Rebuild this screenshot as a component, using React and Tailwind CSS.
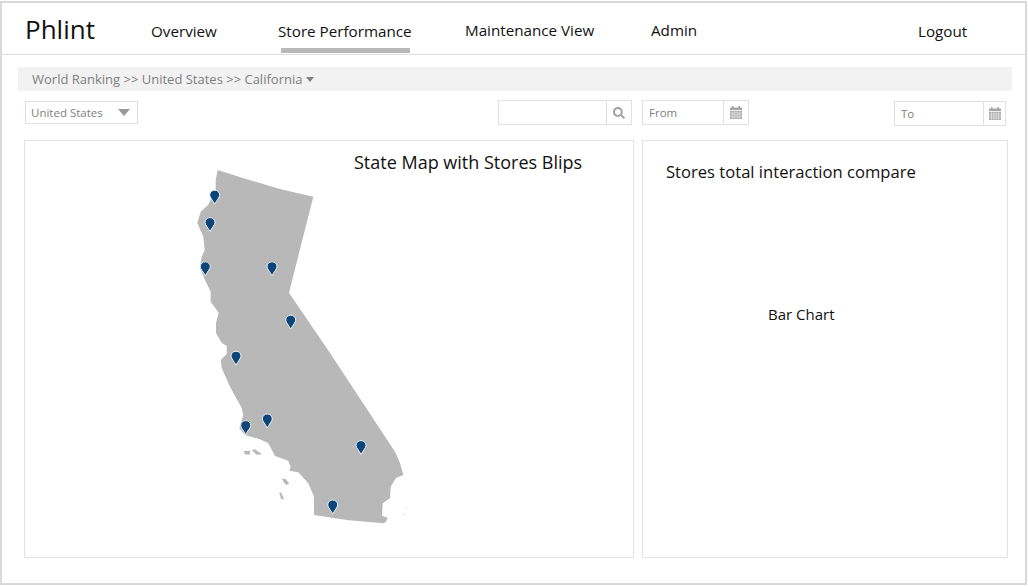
import React from "react";
import { FaSearch } from "react-icons/fa";

const outline =
  "217.7,170 246,179 280,189 313.3,196.7 289,292.7 330,353 395,451.7 400,463 403.3,475 396,478 390.7,486.7 390,498.3 382.7,503.3 382,515.7 387.7,517.7 386,522 383.3,523.3 346.7,520 314,515 314,496.7 308.3,483.3 298.3,472.3 289.3,470.7 290.7,467 288.3,460.7 275,456 268.3,443.3 260,439.3 245,435 239.3,428.3 243.3,415 241.7,408 230,386.7 221.7,368 220.7,360 226.7,354 226.7,346 221.7,342.7 216,333 216,323 218.7,312.7 210.7,301.7 210.7,291.7 205,280 200,268 201.7,256.7 204.7,250 203.3,236.7 197.3,222.7 200.7,211.7 208,205 215.7,190 215.7,180";

const islands = [
  "243.5,451 250,451 250,454.5 245,454.5",
  "251.7,450 255,449.3 262.3,454.3 256.7,454.7",
  "282,478.3 286,479.3 289.3,484 286,484.7 283.3,481.7",
  "279.3,492.7 281,492.3 284,499.3 281,499",
  "406.5,507.5 407.5,507.5 407,509",
  "403.5,514 405,514 404,515",
];

const pins = [
  [214.7, 195],
  [210, 222.4],
  [205.3, 266.6],
  [272, 266.6],
  [290.7, 320],
  [236, 356],
  [267.3, 418.8],
  [245.7, 425.4],
  [361, 445.4],
  [332.7, 504.8],
];

const CalendarIcon = () => (
  <svg width="12" height="13" viewBox="0 0 12 13" fill="#a6a6a6">
    <rect x="2" y="0" width="1.5" height="2.5" />
    <rect x="8.5" y="0" width="1.5" height="2.5" />
    <rect x="0" y="1.5" width="12" height="2.5" />
    <path d="M0 4.8h12V13H0z" />
    <path d="M0 7h12M0 9h12M0 11h12M2.4 4.8V13M4.8 4.8V13M7.2 4.8V13M9.6 4.8V13" stroke="#fff" strokeWidth="0.5" />
  </svg>
);

const CaliforniaMap = () => (
  <svg width="225" height="365" viewBox="190 165 225 365" className="col-start-1 row-start-1 ml-[165px] mt-[24px]">
    <polygon points={outline} fill="#b8b8b8" />
    {islands.map((p) => (
      <polygon key={p} points={p} fill="#b8b8b8" />
    ))}
    {pins.map(([x, y]) => (
      <path
        key={`${x}-${y}`}
        transform={`translate(${x} ${y})`}
        d="M-5 0.2C-5 -2.9 -2.8 -4.8 0 -4.8C2.8 -4.8 5 -2.9 5 0.2C5 2.2 1.7 5.8 0 9.2C-1.7 5.8 -5 2.2 -5 0.2Z"
        fill="#0b4579"
        stroke="#eef2f5"
        strokeWidth="1"
      />
    ))}
  </svg>
);

export default function App() {
  return (
    <div className="mt-px h-[584px] w-[1027px] border-2 border-[#d9d9d9] bg-white font-['Open_Sans',sans-serif] text-[#111111]">
      <header className="flex h-[52px] items-stretch border-b border-[#dedede] text-[15.2px]">
        <div className="ml-[23px] w-[126px] pt-[7px] text-[26px] leading-[38px]">Phlint</div>
        <div className="w-[127px] pt-[16px] leading-[24px]">Overview</div>
        <div className="w-[187px] pt-[16px] leading-[24px]">
          Store Performance
          <div className="ml-[3px] mt-[5px] h-[5px] w-[129px] bg-[#b8b8b8]" />
        </div>
        <div className="w-[186px] pt-[15px] leading-[24px]">Maintenance View</div>
        <div className="w-[267px] pt-[15px] leading-[24px]">Admin</div>
        <div className="pt-[16px] leading-[24px]">Logout</div>
      </header>

      <div className="ml-[16px] mt-[12px] flex h-[24px] w-[994px] items-center gap-[4px] bg-[#f2f2f2] pl-[14px] pt-[1px] text-[13px] text-[#808080]">
        World Ranking &gt;&gt; United States &gt;&gt; California
        <span className="h-0 w-0 border-x-[4px] border-t-[5px] border-x-transparent border-t-[#808080]" />
      </div>

      <div className="ml-[23px] mt-[9px] flex h-[26px] items-start text-[11.5px] text-[#808080]">
        <div className="mt-px flex h-[23px] w-[113px] items-center justify-between border border-[#e0e0e0] pl-[5px] pr-[7px]">
          United States
          <span className="h-0 w-0 border-x-[6px] border-t-[7px] border-x-transparent border-t-[#999999]" />
        </div>
        <div className="ml-[360px] flex h-[25px] w-[134px] border border-[#e0e0e0]">
          <div className="flex-1" />
          <div className="flex w-[25px] items-center justify-center border-l border-[#e0e0e0] text-[#a0a0a0]">
            <FaSearch size={12} />
          </div>
        </div>
        <div className="ml-[10px] flex h-[25px] w-[107px] border border-[#e0e0e0]">
          <div className="flex flex-1 items-center pl-[6px]">From</div>
          <div className="flex w-[25px] items-center justify-center border-l border-[#e0e0e0]">
            <CalendarIcon />
          </div>
        </div>
        <div className="ml-[145px] mt-px flex h-[25px] w-[112px] border border-[#e0e0e0]">
          <div className="flex flex-1 items-center pl-[6px]">To</div>
          <div className="flex w-[22px] items-center justify-center border-l border-[#e0e0e0]">
            <CalendarIcon />
          </div>
        </div>
      </div>

      <div className="ml-[22px] mt-[14px] flex gap-[8px]">
        <section className="grid h-[418px] w-[610px] border border-[#e3e3e3]">
          <h2 className="col-start-1 row-start-1 ml-[329px] mt-[8px] text-[18px] leading-[26px]">State Map with Stores Blips</h2>
          <CaliforniaMap />
        </section>
        <section className="h-[418px] w-[366px] border border-[#e3e3e3]">
          <h2 className="ml-[23px] mt-[19px] text-[16.6px] leading-[24px]">Stores total interaction compare</h2>
          <p className="mt-[119px] pl-[125px] text-[15px] leading-[22px]">Bar Chart</p>
        </section>
      </div>
    </div>
  );
}
